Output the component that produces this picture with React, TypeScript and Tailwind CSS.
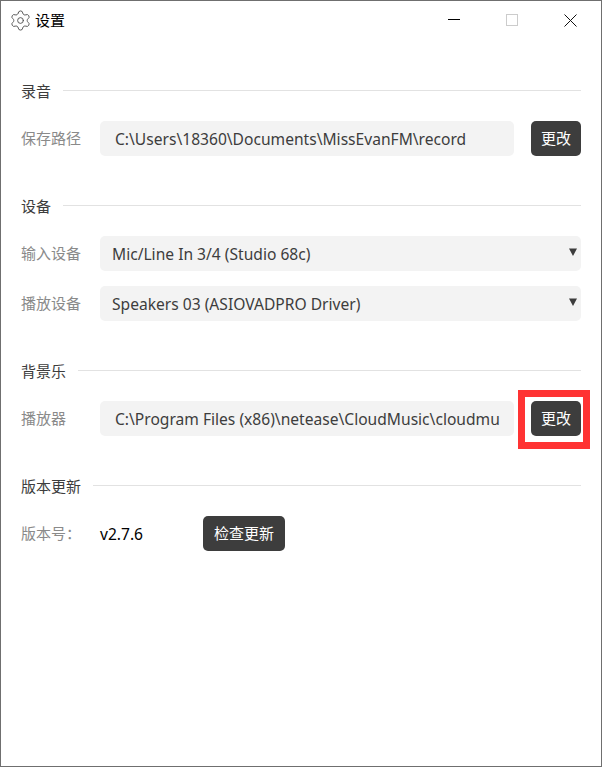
import { Settings } from "lucide-react";

const font = { fontFamily: '"Noto Sans", "Noto Sans CJK SC", sans-serif' };

function Heading({ title }: { title: string }) {
  return (
    <div className="flex items-center h-5 gap-3">
      <span className="text-[15px] leading-5 text-[#3d3d3d]">{title}</span>
      <div className="flex-1 h-px mb-[2px] bg-[#e2e2e2]" />
    </div>
  );
}

function Label({ text }: { text: string }) {
  return <span className="w-[79px] shrink-0 text-[15px] text-[#8a8a8a]">{text}</span>;
}

function PathRow({ label, value }: { label: string; value: string }) {
  return (
    <div className="flex items-center h-[35px] mt-5">
      <Label text={label} />
      <div className="w-[414px] h-[35px] shrink-0 rounded-[5px] bg-[#f3f3f3] pl-[15px] pt-[2px] flex items-center text-[15.6px] text-[#3d3d3d] whitespace-nowrap">
        {value}
      </div>
      <button className="ml-[17px] w-[50px] h-[35px] rounded-[5px] bg-[#3d3d3d] text-white text-[15px]">更改</button>
    </div>
  );
}

function SelectRow({ label, value, className }: { label: string; value: string; className: string }) {
  return (
    <div className={"flex items-center h-[35px] " + className}>
      <Label text={label} />
      <div className="relative flex-1 h-[35px] rounded-[5px] bg-[#f3f3f3] pl-3 pt-[2px] flex items-center text-[15.6px] text-[#3d3d3d]">
        {value}
        <svg className="absolute right-[1px] top-[11px]" width="14" height="10" viewBox="0 0 14 10">
          <path d="M3 1.5h8L7 9z" fill="#3d3d3d" />
        </svg>
      </div>
    </div>
  );
}

export default function App() {
  return (
    <div style={font} className="relative w-[602px] h-[767px] bg-white border border-[#6f6f6f] overflow-hidden">
      <div className="absolute top-[-1px] right-[-1px] w-[51px] h-px bg-[#6e1f26]" />
      <div className="flex items-center h-[38px] pl-2">
        <Settings size={23} strokeWidth={1} className="text-[#555555]" />
        <span className="ml-[3px] text-[15px] text-black">设置</span>
        <div className="ml-auto flex items-center">
          <div className="w-3 h-px mb-[2px] bg-black" />
          <div className="ml-[46px] w-3 h-3 border border-[#cccccc]" />
          <svg className="ml-[46px] mr-6" width="13" height="13" viewBox="0 0 13 13">
            <path d="M.5.5l12 12M12.5.5l-12 12" stroke="#111111" strokeWidth="1" fill="none" />
          </svg>
        </div>
      </div>

      <div className="pl-5 pr-5 pt-[42px]">
        <Heading title="录音" />
        <PathRow label="保存路径" value="C:\Users\18360\Documents\MissEvanFM\record" />

        <div className="mt-10">
          <Heading title="设备" />
          <SelectRow className="mt-5" label="输入设备" value="Mic/Line In 3/4 (Studio 68c)" />
          <SelectRow className="mt-[15px]" label="播放设备" value="Speakers 03 (ASIOVADPRO Driver)" />
        </div>

        <div className="mt-10">
          <Heading title="背景乐" />
          <PathRow label="播放器" value="C:\Program Files (x86)\netease\CloudMusic\cloudmu" />
        </div>

        <div className="mt-10">
          <Heading title="版本更新" />
          <div className="flex items-center h-[35px] mt-5">
            <Label text="版本号：" />
            <span className="w-[103px] pt-[2px] text-[15.6px] text-black">v2.7.6</span>
            <button className="w-[82px] h-[35px] rounded-[5px] bg-[#3d3d3d] text-white text-[15px]">检查更新</button>
          </div>
        </div>
      </div>

      {/* red annotation box */}
      <div className="absolute left-[517px] top-[389px] w-[72px] h-[59px] border-[7px] border-[#ff3333]" />
    </div>
  );
}
